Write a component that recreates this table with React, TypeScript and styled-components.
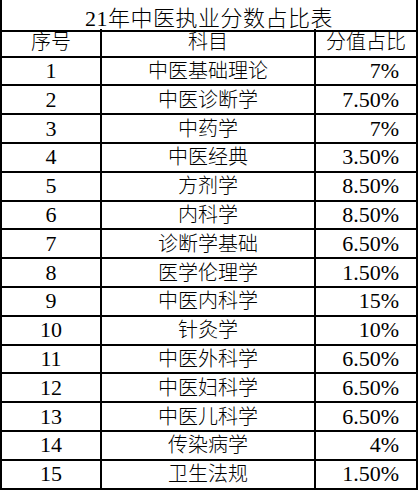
import { Fragment } from 'react';
import styled, { createGlobalStyle } from 'styled-components';

type Row = {
  no: number;
  subject: string;
  share: string;
};

const rows: Row[] = [
  { no: 1, subject: '中医基础理论', share: '7%' },
  { no: 2, subject: '中医诊断学', share: '7.50%' },
  { no: 3, subject: '中药学', share: '7%' },
  { no: 4, subject: '中医经典', share: '3.50%' },
  { no: 5, subject: '方剂学', share: '8.50%' },
  { no: 6, subject: '内科学', share: '8.50%' },
  { no: 7, subject: '诊断学基础', share: '6.50%' },
  { no: 8, subject: '医学伦理学', share: '1.50%' },
  { no: 9, subject: '中医内科学', share: '15%' },
  { no: 10, subject: '针灸学', share: '10%' },
  { no: 11, subject: '中医外科学', share: '6.50%' },
  { no: 12, subject: '中医妇科学', share: '6.50%' },
  { no: 13, subject: '中医儿科学', share: '6.50%' },
  { no: 14, subject: '传染病学', share: '4%' },
  { no: 15, subject: '卫生法规', share: '1.50%' },
];

const GlobalStyle = createGlobalStyle`
  html, body {
    margin: 0;
    padding: 0;
    background: #fff;
  }
  body {
    font-family: "Liberation Serif", "Noto Sans CJK SC", serif;
    color: #000;
  }
`;

const Table = styled.div`
  width: 418px;
  display: grid;
  grid-template-columns: 102px 214px 102px;
  grid-auto-rows: 28.8px;
  box-sizing: border-box;
`;

const Title = styled.div`
  grid-column: 1 / 4;
  height: 32px;
  box-sizing: border-box;
  border-left: 2px solid #000;
  border-right: 2px solid #000;
  border-bottom: 2px solid #000;
  display: flex;
  align-items: center;
  justify-content: center;
  font-size: 22px;
  font-weight: 300;
  letter-spacing: 0.5px;
  padding-top: 1px;
`;

const Cell = styled.div<{ first?: boolean; align?: 'center' | 'right'; num?: boolean }>`
  box-sizing: border-box;
  border-right: 2px solid #000;
  border-bottom: 2px solid #000;
  ${({ first }) => (first ? 'border-left: 2px solid #000;' : '')}
  display: flex;
  align-items: center;
  justify-content: ${({ align }) => (align === 'right' ? 'flex-end' : 'center')};
  padding-right: ${({ align }) => (align === 'right' ? '17px' : '0')};
  font-size: ${({ num }) => (num ? '22px' : '20px')};
  font-weight: 300;
  white-space: nowrap;
  line-height: 1;
`;

const App = () => (
  <>
    <GlobalStyle />
    <Table>
      <Title>21年中医执业分数占比表</Title>
      <Cell first>序号</Cell>
      <Cell>科目</Cell>
      <Cell>分值占比</Cell>
      {rows.map((r) => (
        <Fragment key={r.no}>
          <Cell first num>{r.no}</Cell>
          <Cell>{r.subject}</Cell>
          <Cell align="right" num>{r.share}</Cell>
        </Fragment>
      ))}
    </Table>
  </>
);

export default App;
